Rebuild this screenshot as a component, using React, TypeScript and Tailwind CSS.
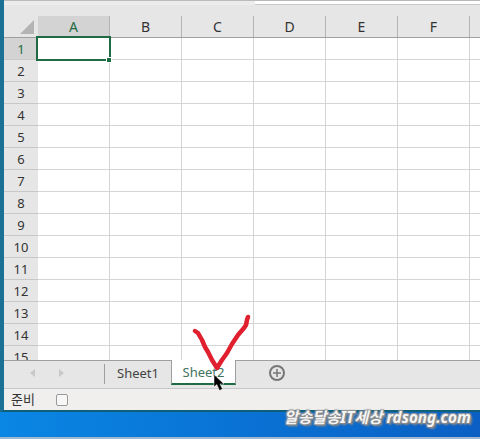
const columns = ["A", "B", "C", "D", "E", "F", ""];
const rows = Array.from({ length: 15 }, (_, i) => i + 1);

function CornerHeader() {
  return (
    <div className="relative h-[21px] w-[34px] shrink-0 bg-[#e6e6e6]">
      <svg className="absolute left-[16px] top-[4px]" width="14" height="14" viewBox="0 0 14 14">
        <path d="M14 0V14H0Z" fill="#b4b4b4" />
      </svg>
    </div>
  );
}

function ColumnHeaders() {
  return (
    <div className="flex h-[22px] shrink-0 border-b border-[#9f9f9f] bg-[#e6e6e6]">
      <CornerHeader />
      {columns.map((col, i) => (
        <div
          key={i}
          className={`flex h-[21px] w-[72px] shrink-0 items-center justify-center border-r border-[#b4b4b4] pt-px text-[14px] ${
            i === 0 ? "bg-[#d3d3d3] text-[#1f6b44]" : "text-[#333333]"
          }`}
        >
          {col}
        </div>
      ))}
    </div>
  );
}

function Row({ n }: { n: number }) {
  return (
    <div className="flex h-[22px] shrink-0">
      <div
        className={`flex h-[22px] w-[34px] shrink-0 items-center justify-center border-b border-[#c8c8c8] pt-[2px] ${
          n === 1 ? "bg-[#d3d3d3] text-[#1f6b44]" : "bg-[#e6e6e6] text-[#333333]"
        }`}
      >
        {n}
      </div>
      {columns.map((_, i) => (
        <div key={i} className="h-[22px] w-[72px] shrink-0 border-b border-r border-[#d4d4d4] bg-white" />
      ))}
    </div>
  );
}

function TabBar() {
  return (
    <div className="flex h-[28px] shrink-0 items-start border-t border-[#9f9f9f] bg-[#e6e6e6] text-[#444444]">
      <div className="flex h-[23px] w-[100px] items-center pl-[26px]">
        <svg width="6" height="8" viewBox="0 0 6 8">
          <path d="M5 0V8L0 4Z" fill="#c8c8c8" />
        </svg>
        <svg className="ml-[22px]" width="6" height="8" viewBox="0 0 6 8">
          <path d="M1 0V8L6 4Z" fill="#c8c8c8" />
        </svg>
      </div>
      <div className="mt-[3px] h-[20px] w-px bg-[#9f9f9f]" />
      <div className="flex h-[23px] w-[66px] items-center justify-center pt-[1px]">Sheet1</div>
      <div className="-mt-px flex h-[25px] w-[65px] items-center justify-center border-x border-b-2 border-x-[#9f9f9f] border-b-[#1f6b44] bg-white pt-px text-[#3f7360]">
        Sheet2
      </div>
      <div className="ml-[33px] mt-[4px] flex h-[16px] w-[16px] items-center justify-center rounded-full border-2 border-[#777777]">
        <svg width="8" height="8" viewBox="0 0 8 8">
          <path d="M4 0V8M0 4H8" stroke="#777777" strokeWidth="1.5" />
        </svg>
      </div>
    </div>
  );
}

function StatusBar() {
  return (
    <div className="flex h-[22px] shrink-0 items-center border-t border-[#c8c8c8] bg-[#f0efee] text-[#333333]">
      <span className="ml-[7px] w-[45px] text-[13px]">준비</span>
      <div className="h-[12px] w-[12px] rounded-[2px] border border-[#9a9a9a] bg-[#f6f6f6]" />
    </div>
  );
}

function RedCheck() {
  return (
    <svg className="absolute left-[190px] top-[312px]" width="64" height="64" viewBox="0 0 64 64">
      <path
        d="M5 19L8 21L12 28L15 35L18 40L22 48L27 56L32 48L37 41L42 32L48 23L54 16L56 13L57 8L58 5"
        fill="none"
        stroke="#e0202e"
        strokeWidth="4.5"
        strokeLinecap="round"
        strokeLinejoin="round"
      />
    </svg>
  );
}

function Cursor() {
  return (
    <svg className="absolute left-[213px] top-[374px]" width="12" height="17" viewBox="0 0 12 17">
      <path d="M1 0.5V13L3.8 10.5L6.5 16.5L9.5 15L7 10H11Z" fill="#000000" stroke="#ffffff" strokeWidth="0.5" />
    </svg>
  );
}

export default function App() {
  return (
    <div className="relative h-[439px] w-[480px] overflow-hidden border-b-2 border-[#a3b8cc] bg-gradient-to-r from-[#0a86e4] to-[#0b5fc4] font-['Noto_Sans','Noto_Sans_CJK_KR',sans-serif] text-[13px] leading-none">
      <div className="flex h-[412px] flex-col border-b-2 border-[#0f5f78] border-l-[4px] border-l-[#1b7095]">
        <div className="flex h-[16px] shrink-0 border-t border-[#b9b9b9] bg-[#e6e6e6]">
          <div className="h-[4px] w-[251px] bg-[#ececec]" />
          <div className="h-[4px] flex-1 border-b border-[#c8c8c8] bg-white" />
        </div>
        <ColumnHeaders />
        <div className="flex min-h-0 flex-1 flex-col overflow-hidden">
          {rows.map((n) => (
            <Row key={n} n={n} />
          ))}
        </div>
        <TabBar />
        <StatusBar />
      </div>

      {/* selected cell A1 */}
      <div className="absolute left-[36px] top-[36px] h-[25px] w-[75px] border-2 border-[#1f6b44]" />
      <div className="absolute left-[106px] top-[57px] h-[6px] w-[6px] border border-white bg-[#1f6b44]" />

      <RedCheck />
      <Cursor />

      <div className="absolute left-[284px] top-[410px] text-[15.3px] font-bold italic text-[#f4f4f4] [text-shadow:1px_1px_1px_#8a8a8a,-1px_1px_1px_#8a8a8a,1px_-1px_1px_#9a9a9a,-1px_-1px_1px_#9a9a9a,2px_2px_2px_#888888]">
        알송달송IT세상 rdsong.com
      </div>
    </div>
  );
}
